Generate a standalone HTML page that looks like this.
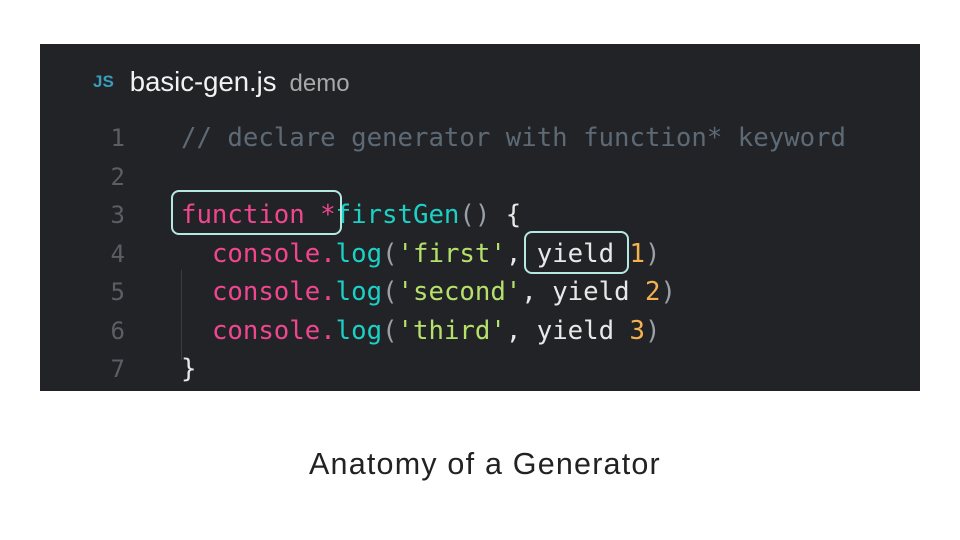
<!DOCTYPE html>
<html><head><style>
body{margin:0;width:960px;height:540px;background:#fff;position:relative;overflow:hidden}
#ed{position:absolute;left:40px;top:44px;width:880px;height:347px;background:#222327}
.hdr{position:absolute;left:93px;top:66px;font-family:"Liberation Sans",sans-serif;white-space:nowrap}
.code{position:absolute;left:181px;top:119px;font-family:"DejaVu Sans Mono",monospace;font-size:25.7px;line-height:38.5px;white-space:pre;color:#e8e8e8}
.ln{position:absolute;left:97px;top:119px;width:28px;text-align:right;font-family:"DejaVu Sans Mono",monospace;font-size:24px;line-height:38.5px;color:#5b5e63;white-space:pre}
.c{color:#5d6a75}.k{color:#f0468f}.f{color:#1bd1c6}.s{color:#b5e06a}.n{color:#f4b24e}.p{color:#9aa0a8}
.box{position:absolute;border:2.5px solid #b4e8e0;border-radius:8px}
</style></head><body>
<div id="ed"></div>
<div class="hdr"><span style="color:#3a9cbc;font-weight:bold;font-size:17px;position:relative;top:-4px">JS</span><span style="color:#f2f2f2;font-size:27.5px;margin-left:16px">basic-gen.js</span><span style="color:#a8a8a8;font-size:24px;margin-left:13px">demo</span></div>
<div style="position:absolute;left:181px;top:270px;width:1px;height:90px;background:#3a3c40"></div>
<div class="ln">1
2
3
4
5
6
7</div>
<div class="code"><span class="c">// declare generator with function* keyword</span>

<span class="k">function *</span><span class="f">firstGen</span><span class="p">()</span> {
  <span class="k">console.</span><span class="f">log</span><span class="p">(</span><span class="s">'first'</span>, yield <span class="n">1</span><span class="p">)</span>
  <span class="k">console.</span><span class="f">log</span><span class="p">(</span><span class="s">'second'</span>, yield <span class="n">2</span><span class="p">)</span>
  <span class="k">console.</span><span class="f">log</span><span class="p">(</span><span class="s">'third'</span>, yield <span class="n">3</span><span class="p">)</span>
}</div>
<div class="box" style="left:171px;top:190px;width:167px;height:41px"></div>
<div class="box" style="left:524px;top:231px;width:101px;height:39px"></div>
<div style="position:absolute;left:309px;top:447px;font-family:'Liberation Sans',sans-serif;font-size:30.5px;letter-spacing:1.2px;color:#222;white-space:nowrap">Anatomy of a Generator</div>
</body></html>
